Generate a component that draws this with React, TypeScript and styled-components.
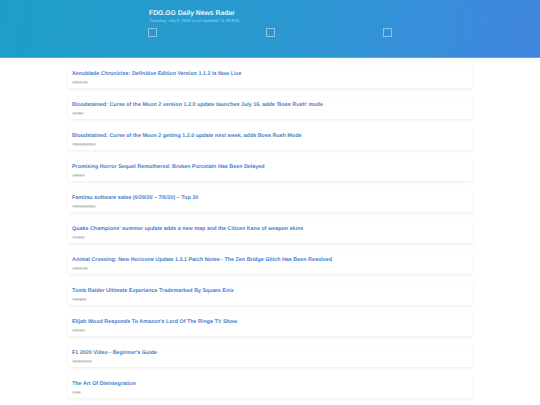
import {createGlobalStyle, styled} from 'styled-components'

const news = [
  {title: 'Xenoblade Chronicles: Definitive Edition Version 1.1.2 Is Now Live', source: 'Nintendo Life'},
  {title: "Bloodstained: Curse of the Moon 2 version 1.2.0 update launches July 16, adds 'Boss Rush' mode", source: 'Gematsu'},
  {title: 'Bloodstained: Curse of the Moon 2 getting 1.2.0 update next week, adds Boss Rush Mode', source: 'Nintendo Everything'},
  {title: 'Promising Horror Sequel Remothered: Broken Porcelain Has Been Delayed', source: 'GameSpot'},
  {title: 'Famitsu software sales (6/29/20 – 7/5/20) – Top 30', source: 'Nintendo Everything'},
  {title: "Quake Champions' summer update adds a new map and the Citizen Kane of weapon skins", source: 'PC Gamer'},
  {title: 'Animal Crossing: New Horizons Update 1.3.1 Patch Notes - The Zen Bridge Glitch Has Been Resolved', source: 'Nintendo Life'},
  {title: 'Tomb Raider Ultimate Experience Trademarked By Square Enix', source: 'GamingBolt'},
  {title: "Elijah Wood Responds To Amazon's Lord Of The Rings TV Show", source: 'GameSpot'},
  {title: "F1 2020 Video - Beginner's Guide", source: 'Operation Sports'},
  {title: 'The Art Of Disintegration', source: 'Kotaku'},
]

const App = () => {
  return (
    <Page>
      <GlobalStyle />
      <Header>
        <HeaderInner>
          <Title>FDG.GG Daily News Radar</Title>
          <Updated>Thursday, July 9, 2020 (Last Updated: 11:28 PM)</Updated>
          <Links>
            <Link><Dot /></Link>
            <Link><Dot /></Link>
            <Link><Dot /></Link>
          </Links>
        </HeaderInner>
      </Header>
      <List>
        {news.map((item) => (
          <Card key={item.title}>
            <Headline>{item.title}</Headline>
            <Tag>{item.source}</Tag>
          </Card>
        ))}
      </List>
    </Page>
  )
}

export default App;

const GlobalStyle = createGlobalStyle`
html, body {
  margin: 0;
  height: 405px;
  overflow: hidden;
  background-color: #fff;
}
* {
  box-sizing: border-box;
}
`
const Page = styled.div`
width: 540px;
height: 405px;
overflow: hidden;
font-family: "Liberation Sans", Arial, sans-serif;
text-rendering: geometricPrecision;
`
const Header = styled.div`
height: 58px;
padding: 9.5px 0 0 149px;
background: linear-gradient(100deg, #1c9fc6 0%, #2c98d2 55%, #4186e0 100%);
border-bottom: 1px solid #62a6e8;
`
const HeaderInner = styled.div`
width: 320px;
`
const Title = styled.div`
font-size: 6.8px;
line-height: 8.5px;
font-weight: 700;
color: #eaf5fb;
`
const Updated = styled.div`
font-size: 4.18px;
line-height: 5px;
color: #a9d5ec;
`
const Links = styled.div`
display: flex;
gap: 108.5px;
margin-top: 5px;
margin-left: -1px;
`
const Link = styled.div`
width: 9px;
height: 9px;
display: flex;
justify-content: center;
align-items: center;
border: 1px solid #86c4e8;
`
const Dot = styled.div`
width: 1px;
height: 1px;
background-color: #3a6f96;
`
const List = styled.div`
width: 404px;
margin: 8px 0 0 68px;
display: flex;
flex-direction: column;
gap: 9px;
`
const Card = styled.div`
height: 22px;
padding: 5px 4px 0;
background-color: #fff;
box-shadow: rgba(0, 0, 0, 0.08) 0px 1px 3px 0px;
`
const Headline = styled.div`
font-size: 5.4px;
line-height: 7px;
font-weight: 700;
color: #4b7fcf;
white-space: nowrap;
`
const Tag = styled.div`
display: table;
margin-top: 2.5px;
padding: 0 1px;
font-size: 2.4px;
line-height: 3.5px;
color: #888;
background-color: #e8e8e8;
border-radius: 1px;
`
